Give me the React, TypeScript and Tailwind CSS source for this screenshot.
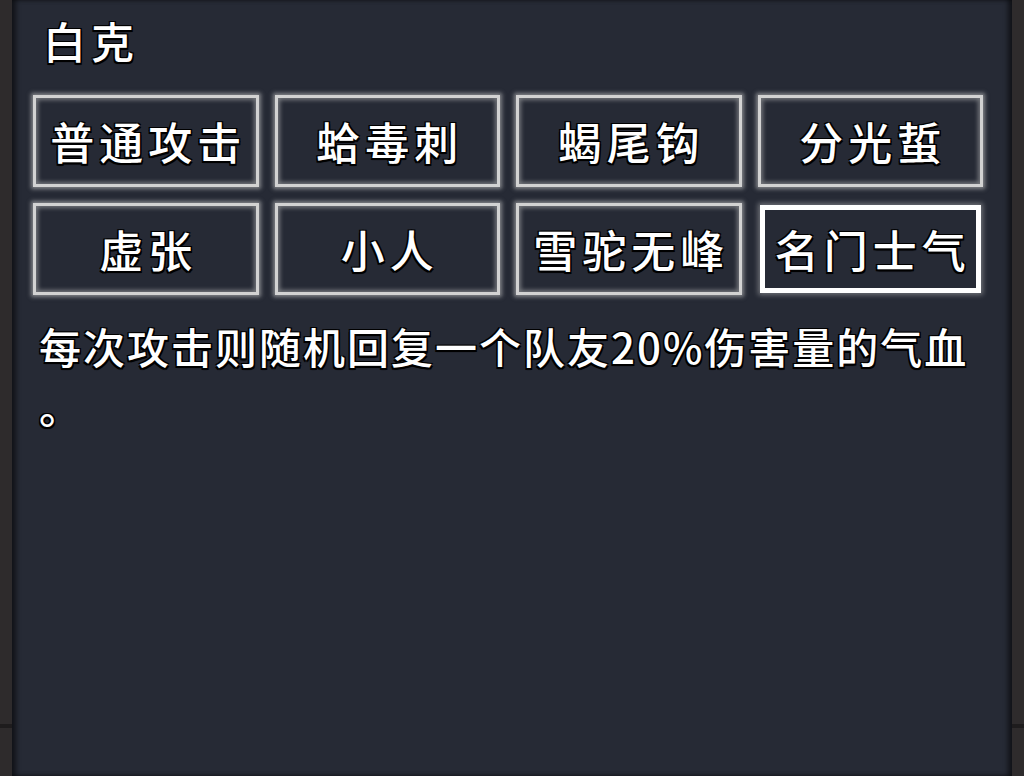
import React from "react";

const skills = ["普通攻击", "蛤毒刺", "蝎尾钩", "分光蜇", "虚张", "小人", "雪驼无峰", "名门士气"];

// white glyphs with a thin dark outline
const ink =
  "text-white [text-shadow:1.5px_1.5px_0_#000,-1.5px_-1.5px_0_#000,1.5px_-1.5px_0_#000,-1.5px_1.5px_0_#000,0_2px_1px_#000]";

function SkillButton({ name, active }: { name: string; active?: boolean }) {
  return (
    <button
      className={
        active
          ? "m-[2px] flex h-[88px] items-center justify-center border-[5px] border-white bg-[#262a35] shadow-[0_0_5px_2px_rgba(200,200,200,0.45)]"
          : "flex h-[92px] items-center justify-center border-[3px] border-[#d2d2d2] bg-[#262a35] shadow-[0_0_4px_2px_rgba(195,195,195,0.6),inset_0_0_4px_2px_rgba(195,195,195,0.5)]"
      }
    >
      <span className={`${ink} -mr-[5px] text-[44px] leading-none font-medium tracking-[5px]`}>{name}</span>
    </button>
  );
}

export default function App() {
  const selected = 7;
  return (
    <div
      className="flex h-[776px] w-[1024px] overflow-hidden bg-[#2d2a2b]"
      style={{ fontFamily: '"Noto Sans CJK SC", "Noto Sans", sans-serif' }}
    >
      {/* left rail */}
      <div className="flex w-[12px] flex-col">
        <div className="h-[724px] bg-[#2e2b2c]" />
        <div className="h-[4px] bg-[#1e1c1d]" />
        <div className="flex-1 bg-[#2e2b2c]" />
      </div>

      <div className="flex-1 bg-[#262a35] shadow-[inset_5px_0_5px_-1px_rgba(0,0,0,0.55),inset_-5px_0_5px_-1px_rgba(0,0,0,0.55)]">
        <div className={`${ink} flex h-[80px] items-center pl-[31px] text-[43px] font-medium tracking-[5px]`}>白克</div>

        <div className="mt-[15px] box-content grid w-[950px] grid-cols-4 gap-x-[16px] gap-y-[16px] pl-[21px]">
          {skills.map((s, i) => (
            <SkillButton key={s} name={s} active={i === selected} />
          ))}
        </div>

        <p
          className={`${ink} mt-[21px] w-[970px] pl-[27px] text-[42px] leading-[60px] font-medium tracking-[2px] [line-break:anywhere]`}
        >
          每次攻击则随机回复一个队友20%伤害量的气血。
        </p>
      </div>

      {/* right rail */}
      <div className="flex w-[12px] flex-col">
        <div className="h-[724px] bg-[#2e2b2c]" />
        <div className="h-[4px] bg-[#1e1c1d]" />
        <div className="flex-1 bg-[#2e2b2c]" />
      </div>
    </div>
  );
}
